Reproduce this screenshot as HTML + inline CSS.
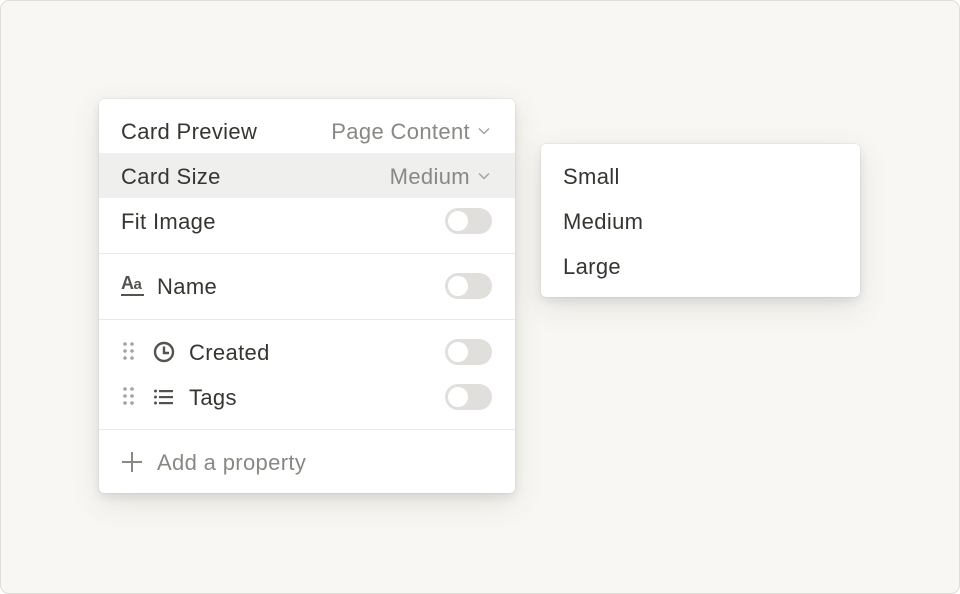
<!DOCTYPE html>
<html><head><style>
*{margin:0;padding:0;box-sizing:border-box}
body{width:960px;height:594px;background:#fff;font-family:"Liberation Sans",sans-serif;position:relative;overflow:hidden}
.bg{position:absolute;left:0;top:0;width:960px;height:594px;background:#f8f7f4;border:1.5px solid #dfded9;border-radius:9px}
.panel{position:absolute;left:99px;top:99px;width:416px;height:394px;background:#fff;border-radius:5px;box-shadow:0 0 0 1px rgba(15,15,15,.04),0 4px 10px rgba(15,15,15,.08),0 10px 30px rgba(80,70,40,.12)}
.sub{position:absolute;left:541px;top:144px;width:319px;height:153px;background:#fff;border-radius:5px;box-shadow:0 0 0 1px rgba(15,15,15,.04),0 4px 10px rgba(15,15,15,.08),0 10px 30px rgba(80,70,40,.12)}
.t{position:absolute;font-size:22px;letter-spacing:0.35px;color:#37352f;line-height:24px;transform:translateY(-11px)}
.g{color:#8a8883}
.tog{position:absolute;left:346px;width:47px;height:26px;border-radius:13px;background:#e0dfdb;transform:translateY(-13px)}
.tog::after{content:"";position:absolute;left:3px;top:3px;width:20px;height:20px;border-radius:50%;background:#fff}
.hl{position:absolute;left:0;top:54px;width:416px;height:45px;background:#efefee}
.div{position:absolute;left:0;width:416px;height:1px;background:#e9e9e7}
svg{position:absolute}
</style></head><body>
<div class="bg"></div>
<div class="panel">
<div class="hl"></div>
<div class="t" style="left:22px;top:32px">Card Preview</div>
<div class="t g" style="right:45px;top:32px">Page Content</div>
<svg style="left:379px;top:28px" width="12" height="8" viewBox="0 0 12 8"><path d="M1 1.5l5 5 5-5" stroke="#a5a39e" stroke-width="1.5" fill="none"/></svg>
<div class="t" style="left:22px;top:77px">Card Size</div>
<div class="t g" style="right:45px;top:77px">Medium</div>
<svg style="left:379px;top:73px" width="12" height="8" viewBox="0 0 12 8"><path d="M1 1.5l5 5 5-5" stroke="#a5a39e" stroke-width="1.5" fill="none"/></svg>
<div class="t" style="left:22px;top:122px">Fit Image</div>
<div class="tog" style="top:122px"></div>
<div class="div" style="top:154px"></div>
<div style="position:absolute;left:22px;top:174px;font-size:18px;font-weight:bold;color:#55534e;letter-spacing:-0.5px;line-height:20px">A<span style="font-size:15px">a</span></div>
<div style="position:absolute;left:22px;top:195px;width:23px;height:2px;background:#55534e"></div>
<div class="t" style="left:58px;top:187px">Name</div>
<div class="tog" style="top:187px"></div>
<div class="div" style="top:220px"></div>
<svg style="left:24px;top:243px" width="12" height="20" viewBox="0 0 12 20" fill="#a5a39e"><circle cx="2" cy="2" r="1.8"/><circle cx="9" cy="2" r="1.8"/><circle cx="2" cy="9" r="1.8"/><circle cx="9" cy="9" r="1.8"/><circle cx="2" cy="16" r="1.8"/><circle cx="9" cy="16" r="1.8"/></svg>
<svg style="left:54px;top:242px" width="22" height="22" viewBox="0 0 22 22"><circle cx="11" cy="11" r="9" stroke="#55534e" stroke-width="2.4" fill="none"/><path d="M11 5.5V12h5" stroke="#55534e" stroke-width="2.4" fill="none"/></svg>
<div class="t" style="left:90px;top:253px">Created</div>
<div class="tog" style="top:253px"></div>
<svg style="left:24px;top:288px" width="12" height="20" viewBox="0 0 12 20" fill="#a5a39e"><circle cx="2" cy="2" r="1.8"/><circle cx="9" cy="2" r="1.8"/><circle cx="2" cy="9" r="1.8"/><circle cx="9" cy="9" r="1.8"/><circle cx="2" cy="16" r="1.8"/><circle cx="9" cy="16" r="1.8"/></svg>
<svg style="left:55px;top:289px" width="20" height="18" viewBox="0 0 20 18" fill="#55534e"><circle cx="1.5" cy="3" r="1.5"/><circle cx="1.5" cy="9" r="1.5"/><circle cx="1.5" cy="15" r="1.5"/><rect x="5" y="2" width="14" height="2.2"/><rect x="5" y="8" width="14" height="2.2"/><rect x="5" y="14" width="14" height="2.2"/></svg>
<div class="t" style="left:90px;top:298px">Tags</div>
<div class="tog" style="top:298px"></div>
<div class="div" style="top:330px"></div>
<svg style="left:23px;top:353px" width="20" height="20" viewBox="0 0 20 20"><path d="M10 0v20M0 10h20" stroke="#8a8883" stroke-width="2"/></svg>
<div class="t g" style="left:58px;top:363px">Add a property</div>
</div>
<div class="sub">
<div class="t" style="left:22px;top:32px">Small</div>
<div class="t" style="left:22px;top:77px">Medium</div>
<div class="t" style="left:22px;top:122px">Large</div>
</div>
</body></html>
